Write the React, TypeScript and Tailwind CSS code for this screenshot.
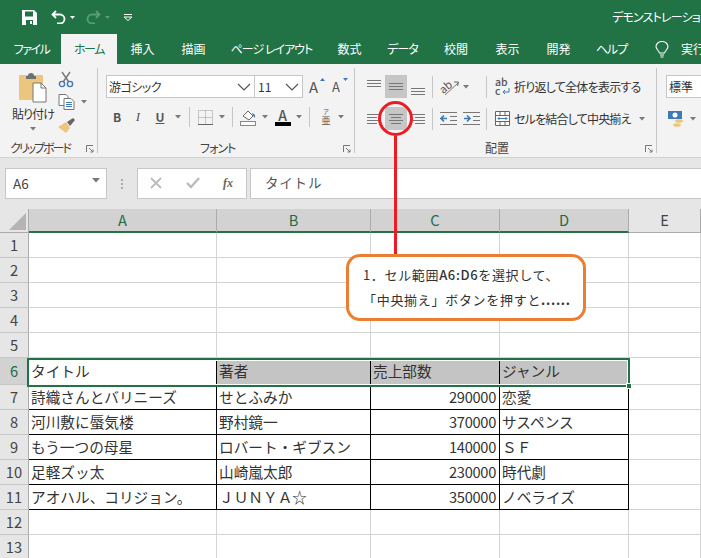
import type { ReactNode } from "react";

const jp = "font-['Noto_Sans_CJK_JP','Noto_Sans',sans-serif]";
const palt = "[font-feature-settings:'palt']";

const tabs = [
  { label: "ファイル", cls: "w-[59px] tracking-[-1.500px]" },
  { label: "ホーム", cls: "w-[56px] bg-[#f3f3f3] text-[#217346] tracking-[-1.500px]" },
  { label: "挿入", cls: "w-[51px]" },
  { label: "描画", cls: "w-[51px]" },
  { label: "ページ レイアウト", cls: "w-[105px] tracking-[-1px]" },
  { label: "数式", cls: "w-[51px]" },
  { label: "データ", cls: "w-[55px] tracking-[-1px]" },
  { label: "校閲", cls: "w-[52px]" },
  { label: "表示", cls: "w-[51px]" },
  { label: "開発", cls: "w-[51px]" },
  { label: "ヘルプ", cls: "w-[55px] tracking-[-1px]" },
];

const rows = [
  ["タイトル", "著者", "売上部数", "ジャンル"],
  ["詩織さんとバリニーズ", "せとふみか", "290000", "恋愛"],
  ["河川敷に蜃気楼", "野村鏡一", "370000", "サスペンス"],
  ["もう一つの母星", "ロバート・ギブスン", "140000", "ＳＦ"],
  ["足軽ズッ太", "山崎嵐太郎", "230000", "時代劇"],
  ["アオハル、コリジョン。", "ＪＵＮＹＡ☆", "350000", "ノベライズ"],
];

function Caret({ cls = "" }: { cls?: string }) {
  return (
    <svg width="6" height="4" viewBox="0 0 6 4" className={`shrink-0 ${cls}`}>
      <path d="M0 0h6L3 3.500z" fill="#7a7a7a" />
    </svg>
  );
}

function Chevron() {
  return (
    <svg width="14" height="8" viewBox="0 0 14 8" fill="none" stroke="#555" strokeWidth="1.200" className="shrink-0">
      <path d="M1 1l6 6 6-6" />
    </svg>
  );
}

function Launcher() {
  return (
    <svg width="8" height="8" viewBox="0 0 8 8" fill="none" stroke="#777" strokeWidth="1">
      <path d="M.5 7V.5H7M3 3l4 4M7 4.500V7H4.500" />
    </svg>
  );
}

function Lines({ ys, xs }: { ys: number[]; xs: [number, number][] }) {
  return (
    <svg width="16" height="16" viewBox="0 0 16 16" stroke="#777" strokeWidth="1">
      {ys.map((y, i) => (
        <path key={i} d={`M${xs[i][0]} ${y + 0.5}H${xs[i][1]}`} />
      ))}
    </svg>
  );
}

function VSep({ cls = "h-[22px]" }: { cls?: string }) {
  return <div className={`w-px shrink-0 bg-[#c6c6c6] ${cls}`} />;
}

function Group({ label, cls, labelCls = "", children }: { label: string; cls: string; labelCls?: string; children: ReactNode }) {
  return (
    <div className={`relative h-[85px] shrink-0 border-r border-[#c6c6c6] ${cls}`}>
      <div className="h-[72px]">{children}</div>
      <div className={`whitespace-nowrap text-[12px] leading-[16px] text-[#444] ${palt} ${labelCls}`}>{label}</div>
      <div className="absolute bottom-0 right-[3px] flex">
        <Launcher />
      </div>
    </div>
  );
}

function Clipboard() {
  return (
    <div className="flex pl-[8px] pt-[3px]">
      <div className="flex w-[50px] shrink-0 flex-col items-center">
        <svg width="30" height="32" viewBox="0 0 30 32" className="shrink-0">
          <rect x="1" y="4" width="24" height="25" rx="1" fill="#ecc67e" />
          <path d="M8 5h2a3 3 0 016 0h2v3H8z" fill="#6f6f6f" />
          <path d="M15 12h8l5 5v14H15z" fill="#fff" stroke="#777" />
          <path d="M23 12v5h5" fill="none" stroke="#777" />
        </svg>
        <div className={`mt-[3px] whitespace-nowrap text-[12px] leading-[16px] tracking-[-0.900px] text-[#333] ${palt}`}>貼り付け</div>
        <Caret cls="mt-[5px]" />
      </div>
      <div className="flex shrink-0 flex-col">
        <svg width="16" height="17" viewBox="0 0 16 17" fill="none" stroke="#3f79b5" strokeWidth="1.400">
          <circle cx="4" cy="13" r="2.600" />
          <circle cx="12" cy="13" r="2.600" />
          <path d="M5.500 10.500L12 1M10.500 10.500L4 1" stroke="#777" />
        </svg>
        <div className="mt-[6px] flex items-center gap-[6px]">
          <svg width="17" height="16" viewBox="0 0 17 16" fill="#fff" stroke="#777">
            <path d="M1 .5h7l2 2v9H1z" />
            <path d="M6 4.500h7l3 3v8H6z" />
            <path d="M8 8.500h6M8 10.500h6M8 12.500h6" stroke="#3f79b5" />
          </svg>
          <Caret />
        </div>
        <svg width="17" height="16" viewBox="0 0 17 16" className="mt-[8px]">
          <path d="M0 9l8-5 4 6-4 5z" fill="#ecc67e" />
          <path d="M9 4l6-4 2 2-5 6z" fill="#666" />
        </svg>
      </div>
    </div>
  );
}

function FontGroup() {
  return (
    <div className="pl-[8px] pt-[7px]">
      <div className="flex h-[23px] items-center">
        <div className="flex h-[23px] w-[149px] items-center justify-between border border-[#c6c6c6] bg-white pl-[2px] pr-[3px]">
          <span className={`text-[12px] tracking-[-0.500px] text-[#333] ${palt}`}>游ゴシック</span>
          <Chevron />
        </div>
        <div className="flex h-[23px] w-[48px] items-center justify-between border border-l-0 border-[#c6c6c6] bg-white pl-[3px] pr-[3px]">
          <span className="text-[12px] text-[#333]">11</span>
          <Chevron />
        </div>
        <div className="ml-[6px] flex items-center gap-[7px] text-[15px] leading-none text-[#555]">
          <span className="relative w-[16px]">
            A
            <svg width="5" height="3" viewBox="0 0 5 3" className="absolute right-0 top-[-1px]">
              <path d="M0 3h5L2.500 0z" fill="#3f79b5" />
            </svg>
          </span>
          <span className="relative w-[16px] text-[13px]">
            A
            <svg width="5" height="3" viewBox="0 0 5 3" className="absolute right-0 top-[-2px]">
              <path d="M0 0h5L2.500 3z" fill="#3f79b5" />
            </svg>
          </span>
        </div>
      </div>
      <div className="mt-[9px] flex h-[20px] items-center text-[#555]">
        <span className="ml-[1px] w-[20px] text-center text-[12px] font-bold">B</span>
        <span className="w-[22px] text-center font-['Liberation_Serif',serif] text-[13px] italic">I</span>
        <span className="w-[22px] text-center text-[12px] font-bold underline">U</span>
        <Caret cls="ml-[4px]" />
        <VSep cls="ml-[8px] h-[20px]" />
        <svg width="15" height="15" viewBox="0 0 15 15" className="ml-[8px] shrink-0" fill="none" stroke="#999" strokeDasharray="1 1">
          <path d="M.5.5h14v14H.5zM7.500.5v14M.5 7.500h14" />
          <path d="M0 14.500h15" stroke="#666" strokeDasharray="none" />
        </svg>
        <Caret cls="ml-[6px]" />
        <VSep cls="ml-[7px] h-[20px]" />
        <svg width="17" height="17" viewBox="0 0 17 17" className="ml-[7px] shrink-0">
          <path d="M3 7l5-5 5 5-4 4z" fill="#fff" stroke="#666" />
          <path d="M12 4q4 1 3 5-2-2-3-5z" fill="#3f79b5" />
          <rect x=".5" y="12.500" width="15" height="4" fill="#fff" stroke="#888" />
        </svg>
        <Caret cls="ml-[5px]" />
        <div className="ml-[6px] flex w-[17px] shrink-0 flex-col items-center">
          <span className="text-[14px] font-medium leading-[14px] text-[#555]">A</span>
          <div className="h-[4px] w-[16px] bg-black" />
        </div>
        <Caret cls="ml-[5px]" />
        <VSep cls="ml-[7px] h-[20px]" />
        <div className={`ml-[11px] w-[10px] shrink-0 text-center text-[#555] ${palt}`}>
          <div className="text-[6px] leading-[8px]">ア</div>
          <div className="text-[9px] leading-[10px]">亜</div>
        </div>
        <Caret cls="ml-[7px]" />
      </div>
    </div>
  );
}

function AlignBtn({ ys, xs, on = false }: { ys: number[]; xs: [number, number][]; on?: boolean }) {
  return (
    <div className={`flex h-[23px] w-[22px] items-center justify-center ${on ? "bg-[#c6c6c6]" : ""}`}>
      <Lines ys={ys} xs={xs} />
    </div>
  );
}

const w3: [number, number][] = [[1, 15], [1, 15], [1, 15]];

function Alignment() {
  return (
    <div className="flex pl-[8px] pt-[7px]">
      <div className="flex w-[69px] shrink-0 flex-col gap-[9px]">
        <div className="flex">
          <AlignBtn ys={[1, 4, 7]} xs={w3} />
          <AlignBtn ys={[4, 7, 10]} xs={w3} on />
          <AlignBtn ys={[9, 12, 15]} xs={w3} />
        </div>
        <div className="flex">
          <AlignBtn ys={[3, 6, 9, 12]} xs={[[1, 15], [1, 11], [1, 15], [1, 11]]} />
          <AlignBtn ys={[3, 6, 9, 12]} xs={[[1, 15], [3, 13], [1, 15], [3, 13]]} on />
          <AlignBtn ys={[3, 6, 9, 12]} xs={[[1, 15], [5, 15], [1, 15], [5, 15]]} />
        </div>
      </div>
      <div className="flex shrink-0 flex-col gap-[9px]">
        <div className="flex h-[23px] items-center">
          <VSep />
          <div className="ml-[7px] flex items-center gap-[3px]">
            <svg width="20" height="18" viewBox="0 0 20 18" fill="none" stroke="#666">
              <text x="0" y="13" fontSize="11" fill="#555" stroke="none" transform="rotate(-40 6 10)">ab</text>
              <path d="M5 17L18 5" stroke="#777" />
              <path d="M14 4l4.500 0-1 4" />
            </svg>
            <Caret />
          </div>
        </div>
        <div className="flex h-[23px] items-center">
          <VSep />
          <svg width="18" height="13" viewBox="0 0 18 13" className="ml-[7px] shrink-0" fill="none" stroke="#777">
            <path d="M0 .5h17M10 4.500h7M10 8.500h7M0 12.500h17" />
            <path d="M7 6.500H1M4 3.500L1 6.500l3 3" stroke="#3f79b5" strokeWidth="1.600" />
          </svg>
          <svg width="18" height="13" viewBox="0 0 18 13" className="ml-[5px] shrink-0" fill="none" stroke="#777">
            <path d="M0 .5h17M10 4.500h7M10 8.500h7M0 12.500h17" />
            <path d="M1 6.500h6M4 3.500l3 3-3 3" stroke="#3f79b5" strokeWidth="1.600" />
          </svg>
        </div>
      </div>
      <div className="ml-[5px] flex min-w-0 flex-col gap-[9px]">
        <div className="flex h-[23px] items-center">
          <VSep />
          <svg width="16" height="19" viewBox="0 0 16 19" className="ml-[8px] shrink-0">
            <text x="0" y="9" fontSize="10.500" fontWeight="500" fill="#555">ab</text>
            <text x="0" y="18" fontSize="10.500" fontWeight="500" fill="#555">c</text>
            <path d="M14 11v4H8M10 13l-2 2 2 2" fill="none" stroke="#3f79b5" />
          </svg>
          <span className={`ml-[3px] whitespace-nowrap text-[12px] tracking-[-0.750px] text-[#333] ${palt}`}>折り返して全体を表示する</span>
        </div>
        <div className="flex h-[23px] items-center">
          <VSep />
          <svg width="15" height="15" viewBox="0 0 15 15" className="ml-[8px] shrink-0" fill="#fff" stroke="#666">
            <path d="M.5.5h14v14H.5zM.5 4.500h14M.5 10.500h14M5 .5v4M10 .5v4M5 10.500v4M10 10.500v4" />
            <path d="M3 7.500h9M4.500 6l-1.500 1.500L4.500 9M10.500 6l1.500 1.500L10.500 9" fill="none" stroke="#3f79b5" />
          </svg>
          <span className={`ml-[4px] whitespace-nowrap text-[12px] tracking-[-0.800px] text-[#333] ${palt}`}>セルを結合して中央揃え</span>
          <Caret cls="ml-[8px]" />
        </div>
      </div>
    </div>
  );
}

function NumberGroup() {
  return (
    <div className="pl-[9px] pt-[7px]">
      <div className={`flex h-[23px] items-center border border-r-0 border-[#c6c6c6] bg-white pl-[2px] text-[12px] text-[#333] ${palt}`}>標準</div>
      <div className="mt-[9px] flex h-[23px] items-center pl-[2px]">
        <svg width="17" height="17" viewBox="0 0 17 17" className="shrink-0">
          <rect x="0" y="1" width="14" height="8" fill="#3f79b5" />
          <circle cx="7" cy="5" r="2.500" fill="#fff" />
          <ellipse cx="11" cy="11" rx="4" ry="1.800" fill="#ecc67e" />
          <ellipse cx="9" cy="15" rx="4" ry="1.800" fill="#ecc67e" />
        </svg>
        <Caret cls="ml-[5px]" />
      </div>
    </div>
  );
}

function Ribbon() {
  return (
    <div className="flex h-[94px] items-start overflow-hidden border-b border-[#d2d2d2] bg-[#f3f3f3] pt-[4px]">
      <Group label="クリップボード" cls="w-[98px]" labelCls="pl-[10px] tracking-[-2px]">
        <Clipboard />
      </Group>
      <Group label="フォント" cls="w-[257px]" labelCls="pl-[102px] tracking-[-1px]">
        <FontGroup />
      </Group>
      <Group label="配置" cls="w-[302px]" labelCls="pl-[130px]">
        <Alignment />
      </Group>
      <div className="min-w-0 flex-1">
        <NumberGroup />
      </div>
    </div>
  );
}

function FormulaBar() {
  return (
    <div className="flex h-[51px] items-start bg-[#e6e6e6] pl-[5px] pt-[10px]">
      <div className="flex h-[31px] w-[102px] shrink-0 items-center justify-between border border-[#c6c6c6] bg-white pl-[7px] pr-[6px] text-[13.500px] text-[#444]">
        A6
        <svg width="8" height="5" viewBox="0 0 8 5" className="mb-[6px]">
          <path d="M0 0h8L4 4.500z" fill="#777" />
        </svg>
      </div>
      <div className="flex h-[31px] w-[30px] shrink-0 flex-col items-center justify-center gap-[2px]">
        <div className="h-[2px] w-[2px] bg-[#aaa]" />
        <div className="h-[2px] w-[2px] bg-[#aaa]" />
        <div className="h-[2px] w-[2px] bg-[#aaa]" />
      </div>
      <div className="flex h-[31px] w-[110px] shrink-0 items-center border border-[#c6c6c6] bg-white pb-[2px] pl-[12px]">
        <svg width="12" height="12" viewBox="0 0 12 12" stroke="#bbb" strokeWidth="1.800" className="shrink-0">
          <path d="M1 1l10 10M11 1L1 11" />
        </svg>
        <svg width="14" height="12" viewBox="0 0 14 12" className="ml-[24px] shrink-0" fill="none" stroke="#bbb" strokeWidth="2.400">
          <path d="M1 6l4 4 8-9" />
        </svg>
        <span className="ml-[23px] font-['Liberation_Serif',serif] text-[12px] font-bold italic text-[#666]">fx</span>
      </div>
      <div className="ml-[3px] flex h-[31px] min-w-0 flex-1 items-center border border-r-0 border-[#c6c6c6] bg-white pb-[3px] pl-[14px] text-[13.500px] tracking-[0.800px] text-[#555]">
        タイトル
      </div>
    </div>
  );
}

function Cell({ row, col, text }: { row: number; col: number; text?: string }) {
  const inTable = row >= 6 && row <= 11 && col < 4;
  const head = row === 6 && col > 0 && col < 4;
  const num = col === 2 && row > 6;
  return (
    <div
      className={`flex items-center overflow-hidden whitespace-nowrap border-b border-r pl-[2px] pr-[3px] text-[14.670px] leading-none text-[#333] ${
        inTable ? "border-black" : "border-[#d4d4d4]"
      } ${head ? "bg-[#c4c4c4]" : "bg-white"} ${num ? "justify-end tracking-[-0.300px]" : ""}`}
    >
      {text}
    </div>
  );
}

function Row({ n }: { n: number }) {
  const data = n >= 6 && n <= 11 ? rows[n - 6] : [];
  return (
    <>
      <div
        className={`flex items-center justify-center border-b border-r border-b-[#c6c6c6] border-r-[#ababab] text-[14.670px] leading-none ${
          n === 6 ? "bg-[#d2d2d2] text-[#1f6b45]" : "bg-[#e6e6e6] text-[#444]"
        }`}
      >
        {n}
      </div>
      {[0, 1, 2, 3, 4].map((c) => (
        <Cell key={c} row={n} col={c} text={data[c]} />
      ))}
    </>
  );
}

function Sheet() {
  const nums = Array.from({ length: 13 }, (_, i) => i + 1);
  return (
    <div className="relative grid grid-cols-[29px_188px_154px_129px_129px_1fr] grid-rows-[24px_repeat(5,25px)_27px_repeat(7,25px)] bg-white">
      <div className="flex items-end justify-end border-b border-r border-[#ababab] bg-[#e6e6e6] p-[2px]">
        <svg width="17" height="17" viewBox="0 0 17 17">
          <path d="M17 0v17H0z" fill="#b4b4b4" />
        </svg>
      </div>
      {["A", "B", "C", "D"].map((c) => (
        <div key={c} className="flex items-center justify-center border-b-2 border-r border-b-[#217346] border-r-[#ababab] bg-[#d2d2d2] text-[14.670px] leading-none text-[#1f6b45]">
          {c}
        </div>
      ))}
      <div className="flex items-center justify-center border-b border-r border-[#ababab] bg-[#e6e6e6] text-[14.670px] leading-none text-[#444]">E</div>
      {nums.map((n) => (
        <Row key={n} n={n} />
      ))}
      {/* selection A6:D6 */}
      <div className="pointer-events-none absolute left-[27px] top-[149px] h-[29px] w-[603px] border-2 border-[#217346] shadow-[inset_0_0_0_1px_#fff]">
        <div className="absolute bottom-[-4px] right-[-4px] h-[6px] w-[6px] border border-white bg-[#217346]" />
      </div>
    </div>
  );
}

export default function App() {
  return (
    <div className={`relative h-[558px] w-[701px] overflow-hidden bg-white ${jp}`}>
      {/* title bar */}
      <div className="flex h-[34px] items-center overflow-hidden bg-[#217346] pl-[22px] text-white">
        <svg width="15" height="15" viewBox="0 0 15 15" className="shrink-0">
          <path d="M0 0h12l3 3v12H0z" fill="#fff" />
          <rect x="3" y="1.500" width="8" height="5" fill="#217346" />
          <rect x="4" y="10" width="7" height="5" fill="#217346" />
          <rect x="8" y="11" width="2" height="3" fill="#fff" />
        </svg>
        <svg width="15" height="14" viewBox="0 0 15 14" fill="none" stroke="#fff" strokeWidth="1.800" className="ml-[14px] shrink-0">
          <path d="M5 1L1.500 4.500 5 8M2 4.500h7a4.500 4.500 0 010 9H6" />
        </svg>
        <svg width="5" height="3" viewBox="0 0 5 3" className="ml-[4px] shrink-0">
          <path d="M0 0h5L2.500 3z" fill="#fff" />
        </svg>
        <svg width="15" height="14" viewBox="0 0 15 14" fill="none" stroke="#5b9a7b" strokeWidth="1.800" className="ml-[11px] shrink-0">
          <path d="M10 1l3.500 3.500L10 8M13 4.500H6a4.500 4.500 0 000 9h3" />
        </svg>
        <svg width="5" height="3" viewBox="0 0 5 3" className="ml-[4px] shrink-0">
          <path d="M0 0h5L2.500 3z" fill="#5b9a7b" />
        </svg>
        <svg width="8" height="7" viewBox="0 0 8 7" className="ml-[14px] shrink-0" fill="none" stroke="#fff">
          <path d="M0 .5h8" />
          <path d="M0 3h8L4 6.500z" />
        </svg>
        <span className={`ml-[480px] shrink-0 whitespace-nowrap text-[12px] tracking-[-0.800px] ${palt}`}>デモンストレーション</span>
      </div>

      {/* tabs */}
      <div className="flex h-[30px] items-stretch overflow-hidden bg-[#217346] pl-[2px] text-[12px] text-white">
        {tabs.map((t) => (
          <div key={t.label} className={`flex shrink-0 items-center justify-center whitespace-pre ${palt} ${t.cls}`}>
            {t.label}
          </div>
        ))}
        <svg width="14" height="17" viewBox="0 0 14 17" className="ml-[16px] shrink-0 self-center" fill="none" stroke="#fff" strokeWidth="1.100">
          <path d="M4.500 12C4 9.500 1 8.500 1 5.500a6 5 0 0112 0C13 8.500 10 9.500 9.500 12zM5 14h4M5.500 16h3" />
        </svg>
        <span className="ml-[12px] shrink-0 self-center whitespace-nowrap">実行</span>
      </div>

      <Ribbon />
      <FormulaBar />
      <Sheet />

      {/* annotation */}
      <div className="absolute left-[378px] top-[101px] h-[35px] w-[35px] rounded-full border-[3px] border-[#ed1c24]" />
      <div className="absolute left-[394px] top-[136px] h-[120px] w-[3px] bg-[#ed1c24]" />
      <div className="absolute left-[346px] top-[254px] flex h-[67px] w-[240px] flex-col justify-center rounded-[14px] border-[3px] border-[#ed7d31] bg-white pb-[2px] pl-[14px] text-[13px] leading-[25px] text-[#333]">
        <div className="whitespace-nowrap tracking-[0.650px]">1．セル範囲<span className="font-medium">A6:D6</span>を選択して、</div>
        <div className="whitespace-nowrap tracking-[0.700px]">「中央揃え」ボタンを押すと<span className="font-bold">......</span></div>
      </div>
    </div>
  );
}
